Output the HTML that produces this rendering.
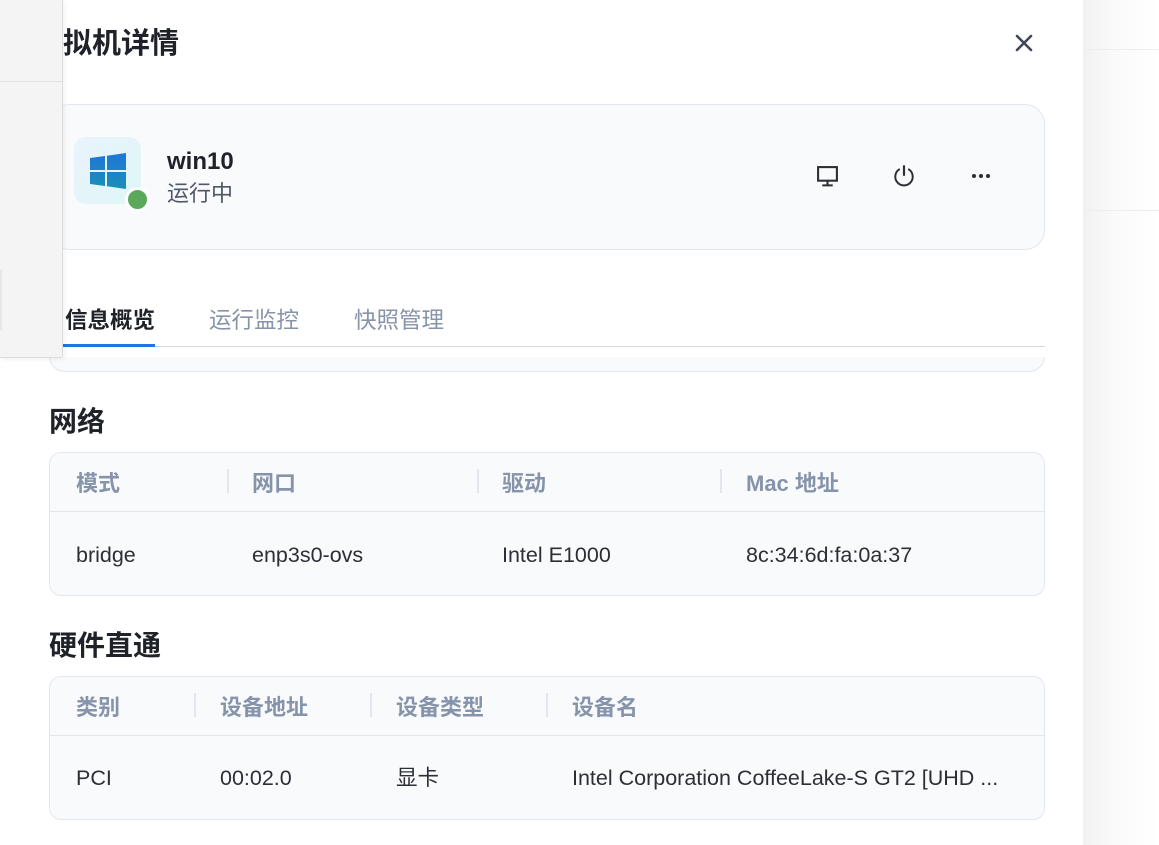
<!DOCTYPE html>
<html><head><meta charset="utf-8"><style>
*{margin:0;padding:0;box-sizing:border-box}
body{width:1159px;height:845px;overflow:hidden;background:#fff;font-family:"Liberation Sans","Noto Sans CJK SC",sans-serif;position:relative;color:#1f2329}
.a{position:absolute;white-space:nowrap}
.right{left:1083px;top:0;width:76px;height:845px;background:linear-gradient(90deg,#f1f1f2,#fafafa 40%,#fff)}
.card{position:absolute;background:#f9fafc;border:1px solid #e2e7ef}
.h{font-size:22px;font-weight:bold;color:#8594ab;line-height:26px}
.d{font-size:21.5px;color:#2b2f36;line-height:26px}
.sep{position:absolute;width:2px;height:24px;background:#e2e6ee}
.sec{font-size:28px;font-weight:bold;color:#1f2329;line-height:32px}
</style></head><body>
<div class="a right"></div>
<div class="a" style="left:1083px;top:49px;width:76px;height:1px;background:#eee"></div>
<div class="a" style="left:1083px;top:210px;width:76px;height:1px;background:#eee"></div>

<div class="a" style="left:34px;top:26px;font-size:29px;font-weight:bold;line-height:36px">虚拟机详情</div>
<svg class="a" style="left:1014px;top:33px" width="20" height="20" viewBox="0 0 20 20"><path d="M3 3L17 17M17 3L3 17" stroke="#3e4756" stroke-width="2.6" stroke-linecap="round"/></svg>

<div class="card" style="left:49px;top:104px;width:996px;height:146px;border-radius:20px"></div>
<div class="a" style="left:74px;top:137px;width:67px;height:67px;border-radius:12px;background:linear-gradient(135deg,#e9f4fc,#def6f6)"></div>
<svg class="a" style="left:90px;top:153px" width="36" height="36" viewBox="0 0 36 36"><defs><linearGradient id="g" x1="0" y1="0" x2="0" y2="1"><stop offset="0" stop-color="#2076d8"/><stop offset="1" stop-color="#1a8fb6"/></linearGradient></defs><path d="M0 5L15 3V17H0ZM17 2.7L36 0V17H17ZM0 19H15V33L0 31ZM17 19H36V36L17 33.3Z" fill="url(#g)"/></svg>
<div class="a" style="left:125px;top:187px;width:25px;height:25px;border-radius:50%;background:#5aa85a;border:3px solid #fff"></div>
<div class="a" style="left:167px;top:147px;font-size:24px;font-weight:bold;color:#1f2329;line-height:30px">win10</div>
<div class="a" style="left:167px;top:180px;font-size:22px;color:#4f5868;line-height:28px">运行中</div>
<svg class="a" style="left:816px;top:165px" width="23" height="23" viewBox="0 0 22 22"><rect x="2" y="2" width="18" height="13" fill="none" stroke="#2b2f36" stroke-width="2"/><path d="M11 15V19M6 19.5H16" stroke="#2b2f36" stroke-width="2"/></svg>
<svg class="a" style="left:892px;top:164px" width="24" height="24" viewBox="0 0 22 22"><path d="M11 2V10" stroke="#2b2f36" stroke-width="2" stroke-linecap="round"/><path d="M6.5 5A8 8 0 1 0 15.5 5" fill="none" stroke="#2b2f36" stroke-width="1.8" stroke-linecap="round"/></svg>
<svg class="a" style="left:970px;top:170px" width="22" height="12" viewBox="0 0 22 12"><circle cx="4" cy="6" r="2" fill="#2b2f36"/><circle cx="11" cy="6" r="2" fill="#2b2f36"/><circle cx="18" cy="6" r="2" fill="#2b2f36"/></svg>

<div class="card" style="left:49px;top:300px;width:996px;height:72px;border-radius:0 0 16px 16px"></div>
<div class="a" style="left:49px;top:280px;width:998px;height:77px;background:#fff"></div>
<div class="a" style="left:65px;top:306px;font-size:22.5px;font-weight:bold;color:#1f2329;line-height:30px">信息概览</div>
<div class="a" style="left:209px;top:306px;font-size:22.5px;color:#8693a8;line-height:30px">运行监控</div>
<div class="a" style="left:354px;top:306px;font-size:22.5px;color:#8693a8;line-height:30px">快照管理</div>
<div class="a" style="left:49px;top:346px;width:996px;height:1px;background:#d3d8e0"></div>
<div class="a" style="left:62px;top:344px;width:93px;height:3px;background:#2275dd"></div>

<div class="a sec" style="left:49px;top:406px">网络</div>
<div class="card" style="left:49px;top:452px;width:996px;height:144px;border-radius:12px"></div>
<div class="a" style="left:50px;top:511px;width:994px;height:1px;background:#e2e6ee"></div>
<div class="a h" style="left:76px;top:471px">模式</div>
<div class="sep" style="left:227px;top:469px"></div>
<div class="a h" style="left:252px;top:471px">网口</div>
<div class="sep" style="left:477px;top:469px"></div>
<div class="a h" style="left:502px;top:471px">驱动</div>
<div class="sep" style="left:720px;top:469px"></div>
<div class="a h" style="left:746px;top:471px">Mac 地址</div>
<div class="a d" style="left:76px;top:542px">bridge</div>
<div class="a d" style="left:252px;top:542px">enp3s0-ovs</div>
<div class="a d" style="left:502px;top:542px">Intel E1000</div>
<div class="a d" style="left:746px;top:542px">8c:34:6d:fa:0a:37</div>

<div class="a sec" style="left:49px;top:630px">硬件直通</div>
<div class="card" style="left:49px;top:676px;width:996px;height:144px;border-radius:12px"></div>
<div class="a" style="left:50px;top:735px;width:994px;height:1px;background:#e2e6ee"></div>
<div class="a h" style="left:76px;top:695px">类别</div>
<div class="sep" style="left:194px;top:693px"></div>
<div class="a h" style="left:220px;top:695px">设备地址</div>
<div class="sep" style="left:370px;top:693px"></div>
<div class="a h" style="left:396px;top:695px">设备类型</div>
<div class="sep" style="left:546px;top:693px"></div>
<div class="a h" style="left:572px;top:695px">设备名</div>
<div class="a d" style="left:76px;top:765px">PCI</div>
<div class="a d" style="left:220px;top:765px">00:02.0</div>
<div class="a d" style="left:396px;top:765px">显卡</div>
<div class="a d" style="left:572px;top:765px">Intel Corporation CoffeeLake-S GT2 [UHD ...</div>

<div class="a" style="left:0;top:0;width:63px;height:358px;background:#f4f4f4;border-right:1px solid #dcdcdc;border-bottom:1px solid #dcdcdc;border-radius:0 0 3px 0;box-shadow:2px 2px 4px rgba(0,0,0,.05)"></div>
<div class="a" style="left:0;top:81px;width:62px;height:1px;background:#e2e2e2"></div>
<div class="a" style="left:0;top:270px;width:2px;height:60px;background:#e6e6e6"></div>
</body></html>
